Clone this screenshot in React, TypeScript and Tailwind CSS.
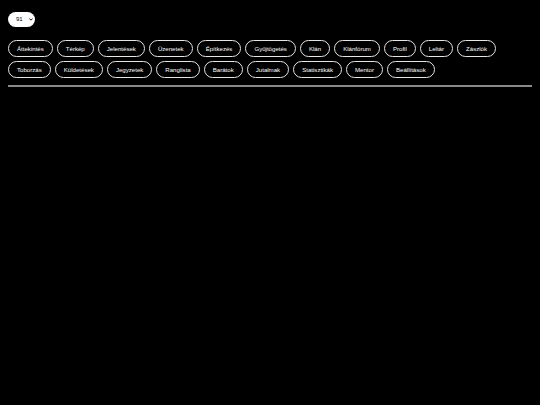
import React from "react";

const row1 = ["Áttekintés", "Térkép", "Jelentések", "Üzenetek", "Építkezés", "Gyűjtögetés", "Klán", "Klánfórum", "Profil", "Leltár", "Zászlók"];
const row2 = ["Toborzás", "Küldetések", "Jegyzetek", "Ranglista", "Barátok", "Jutalmak", "Statisztikák", "Mentor", "Beállítások"];

export default function App() {
  return (
    <div className="min-h-[405px] w-full bg-black px-[8px] pt-[12px] text-white" style={{ fontFamily: '"Liberation Sans", Arial, sans-serif' }}>
      <div className="relative flex w-fit">
        <select
          defaultValue="91"
          className="block h-[15px] w-[27px] appearance-none rounded-full bg-white pl-[8px] pr-[8px] text-[6px] leading-[7px] text-black outline-none"
        >
          <option value="91">91</option>
        </select>
        <svg className="pointer-events-none absolute left-[21px] top-[6px]" width="4" height="3" viewBox="0 0 4 3">
          <path d="M0.4 0.5 L2 2.2 L3.6 0.5" fill="none" stroke="#000" strokeWidth="0.9" />
        </svg>
      </div>
      <div className="mt-[13px] flex flex-col gap-[4px]">
        {[row1, row2].map((row, i) => (
          <div key={i} className="flex gap-[4px]">
            {row.map((label) => (
              <button
                key={label}
                className="rounded-full border border-[#e5e5e5] bg-black px-[8px] py-[4px] text-[6.1px] leading-[7px] text-white"
              >
                {label}
              </button>
            ))}
          </div>
        ))}
      </div>
      <hr className="mt-[7px] border-0 border-t-2 border-[#8a8a8a]" />
    </div>
  );
}
